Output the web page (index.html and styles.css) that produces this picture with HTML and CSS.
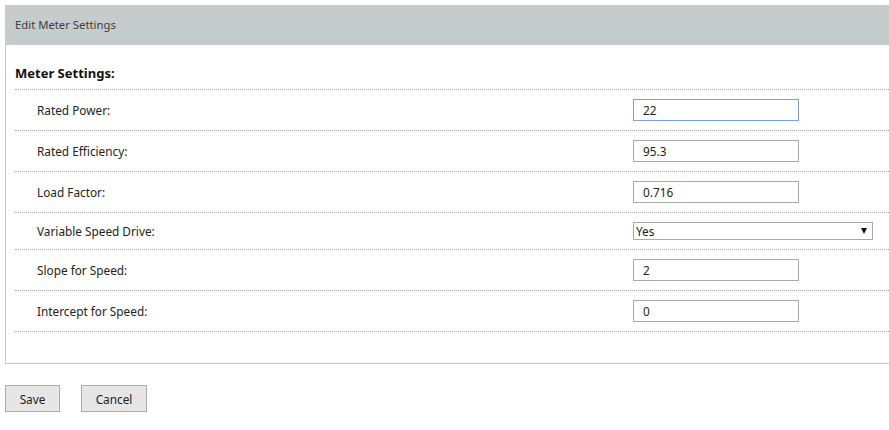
FILE: index.html
```html
<!DOCTYPE html>
<html>
<head>
<meta charset="utf-8">
<link rel="stylesheet" href="styles.css">
</head>
<body>
<div class="panel">
  <div class="panel-head">Edit Meter Settings</div>
  <div class="panel-body">
    <div class="section-title">Meter Settings:</div>
    <div class="row"><label class="lbl">Rated Power:</label><input class="field focused" type="text" value="22"></div>
    <div class="row"><label class="lbl">Rated Efficiency:</label><input class="field" type="text" value="95.3"></div>
    <div class="row"><label class="lbl">Load Factor:</label><input class="field" type="text" value="0.716"></div>
    <div class="row row-sel"><label class="lbl">Variable Speed Drive:</label>
      <div class="select-wrap"><select class="sel"><option>Yes</option></select><span class="arrow"></span></div>
    </div>
    <div class="row"><label class="lbl">Slope for Speed:</label><input class="field" type="text" value="2"></div>
    <div class="row"><label class="lbl">Intercept for Speed:</label><input class="field" type="text" value="0"></div>
  </div>
</div>
<div class="actions">
  <button class="btn btn-save">Save</button>
  <button class="btn btn-cancel">Cancel</button>
</div>
</body>
</html>
```
FILE: styles.css
```css
html, body { margin: 0; padding: 0; overflow: hidden; background: #fff; }
body {
  padding: 5px 0 0 5px;
  font-family: "Segoe UI", "Noto Sans", "Open Sans", sans-serif;
  font-size: 11.8px;
  color: #222;
}
.panel {
  border-left: 1px solid #c8c8c8;
  border-bottom: 1px solid #c8c8c8;
}
.panel-head {
  background: #c6cbcb;
  height: 40px;
  line-height: 40px;
  padding-left: 10px;
  color: #3e3e3e;
  font-size: 11.3px;
  margin-left: -1px;
}
.panel-body {
  padding: 0 0 31px 9px;
}
.section-title {
  font-weight: bold;
  font-size: 13px;
  color: #111;
  line-height: 14px;
  padding-top: 21px;
  box-sizing: border-box;
  border-bottom: 1px dotted #a8a8a8;
  height: 45px;
}
.row {
  display: flex;
  align-items: center;
  height: 41px;
  border-bottom: 1px dotted #a8a8a8;
  box-sizing: border-box;
}
.row-sel { height: 37px; }
.lbl {
  width: 596px;
  padding-left: 22px;
  color: #222;
}
.field {
  width: 166px;
  height: 22px;
  box-sizing: border-box;
  border: 1px solid #a9a9a9;
  padding: 0 9px;
  font-family: inherit;
  font-size: 11.8px;
  color: #222;
  outline: none;
  margin: 0;
}
.field.focused { border-color: #7aa0d6; }
.select-wrap {
  position: relative;
  width: 240px;
  height: 18px;
}
.sel {
  appearance: none;
  -webkit-appearance: none;
  width: 100%;
  height: 18px;
  box-sizing: border-box;
  border: 1px solid #a9a9a9;
  background: #fff;
  padding: 0 0 0 2px;
  font-family: inherit;
  font-size: 11.8px;
  color: #222;
  margin: 0;
  border-radius: 0;
}
.arrow {
  position: absolute;
  right: 6px;
  top: 6px;
  width: 0;
  height: 0;
  border-left: 3.5px solid transparent;
  border-right: 3.5px solid transparent;
  border-top: 6px solid #111;
}
.actions {
  display: flex;
  gap: 21px;
  margin-top: 21px;
}
.btn {
  height: 27px;
  box-sizing: border-box;
  border: 1px solid #adadad;
  background: #e6e6e6;
  font-family: inherit;
  font-size: 11.8px;
  color: #222;
  padding: 1px 0 0;
  margin: 0;
}
.btn-save { width: 55px; }
.btn-cancel { width: 66px; }
```
